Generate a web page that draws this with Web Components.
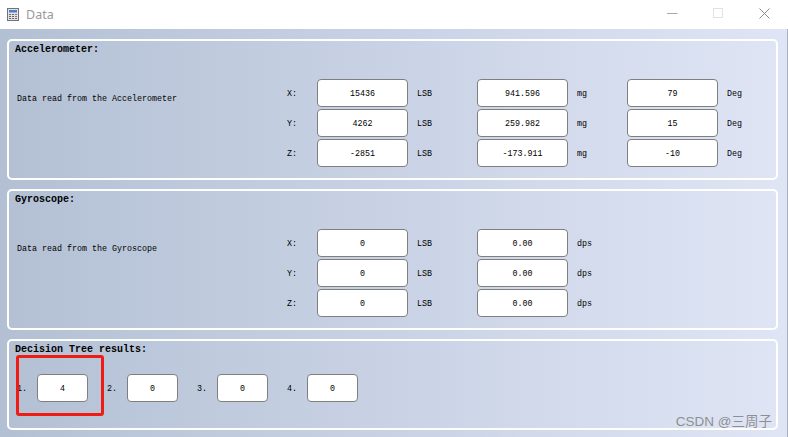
<!DOCTYPE html>
<html>
<head>
<meta charset="utf-8">
<title>Data</title>
<style>
  html, body { margin: 0; padding: 0; height: 100%; background: #fff; overflow: hidden; }
</style>
</head>
<body>
<data-window>
  <sensor-panel heading="Accelerometer:" text="Data read from the Accelerometer">
    <readout-row axis="X:" values="15436|LSB,941.596|mg,79|Deg"></readout-row>
    <readout-row axis="Y:" values="4262|LSB,259.982|mg,15|Deg"></readout-row>
    <readout-row axis="Z:" values="-2851|LSB,-173.911|mg,-10|Deg"></readout-row>
  </sensor-panel>
  <sensor-panel heading="Gyroscope:" text="Data read from the Gyroscope">
    <readout-row axis="X:" values="0|LSB,0.00|dps"></readout-row>
    <readout-row axis="Y:" values="0|LSB,0.00|dps"></readout-row>
    <readout-row axis="Z:" values="0|LSB,0.00|dps"></readout-row>
  </sensor-panel>
  <tree-panel heading="Decision Tree results:" values="4,0,0,0"></tree-panel>
</data-window>

<script>
// caja blanca con el valor
class ValueBox extends HTMLElement {
    constructor() {
        super();
        this.attachShadow({ mode: 'open' });
        this.shadowRoot.innerHTML = `
            <style>
                :host {
                    display: flex;
                    align-items: center;
                    justify-content: center;
                    box-sizing: border-box;
                    width: 91px;
                    height: 28px;
                    padding-top: 1px;
                    background: #fff;
                    border: 1px solid #7f7f7f;
                    border-radius: 4px;
                    font: 8.33px "Liberation Mono", monospace;
                    color: #000;
                }
            </style>
            <slot></slot>
        `;
    }
}
customElements.define('value-box', ValueBox);

class TitleBar extends HTMLElement {
    constructor() {
        super();
        this.attachShadow({ mode: 'open' });
        this.shadowRoot.innerHTML = `
            <style>
                :host {
                    display: flex;
                    align-items: center;
                    height: 29px;
                    flex: none;
                    background: #fff;
                    padding: 0 1px 0 7px;
                    font: 12.5px "Noto Sans", sans-serif;
                    color: #9a9a9a;
                }
                svg { display: block; }
                .name { margin-left: 7px; flex: 1; }
                .btn {
                    display: flex;
                    justify-content: center;
                    align-self: flex-start;
                    margin-top: 8px;
                    width: 46px;
                }
            </style>
            <svg width="12" height="13" viewBox="0 0 12 13">
                <rect x=".5" y=".5" width="11" height="12" fill="#dfe3e8" stroke="#6d7480"/>
                <rect x="2" y="2" width="8" height="2.5" fill="#4f7fc0"/>
                <path d="M2 6h2v1H2zM5 6h2v1H5zM2 8h2v1H2zM5 8h2v1H5zM2 10h2v1H2zM5 10h2v1H5z" fill="#666"/>
                <path d="M8 6h2v1H8zM8 8h2v1H8z" fill="#c85a4a"/>
                <path d="M8 10h2v1H8z" fill="#666"/>
            </svg>
            <span class="name">Data</span>
            <span class="btn"><svg width="11" height="11" viewBox="0 0 11 11"><path d="M0 5.5h10.5" stroke="#a8a8a8"/></svg></span>
            <span class="btn"><svg width="11" height="11" viewBox="0 0 11 11"><rect x=".5" y=".5" width="9" height="9" fill="none" stroke="#e2e2e2"/></svg></span>
            <span class="btn"><svg width="11" height="11" viewBox="0 0 11 11"><path d="M.5.5l10 10M10.5.5l-10 10" stroke="#8a8a8a"/></svg></span>
        `;
    }
}
customElements.define('title-bar', TitleBar);

class ReadoutRow extends HTMLElement {
    constructor() {
        super();
        this.attachShadow({ mode: 'open' });
    }

    connectedCallback() {
        const groups = this.getAttribute('values').split(',');

        let cells = "";
        groups.forEach((g, i) => {
            const parts = g.split('|');
            cells += `<value-box>${parts[0]}</value-box><span class="unit u${i}">${parts[1]}</span>`;
        });

        this.shadowRoot.innerHTML = `
            <style>
                :host {
                    display: flex;
                    align-items: center;
                    height: 28px;
                    font: 8.33px "Liberation Mono", monospace;
                    color: #000;
                }
                .axis { width: 31px; box-sizing: border-box; padding: 1px 0 0 1px; }
                .unit { padding: 1px 0 0 9px; box-sizing: border-box; }
                .u0 { width: 69px; }
                .u1 { width: 59px; }
            </style>
            <span class="axis">${this.getAttribute('axis')}</span>${cells}
        `;
    }
}
customElements.define('readout-row', ReadoutRow);

class SensorPanel extends HTMLElement {
    constructor() {
        super();
        this.attachShadow({ mode: 'open' });
    }

    connectedCallback() {
        this.shadowRoot.innerHTML = `
            <style>
                :host {
                    display: block;
                    box-sizing: border-box;
                    height: 141px;
                    border: 2px solid #fff;
                    border-radius: 5px;
                    padding: 3px 6px 0 6px;
                    color: #000;
                }
                h2 {
                    margin: 0;
                    font: bold 10px/12px "Liberation Mono", monospace;
                }
                .body { display: flex; margin-top: 23px; }
                .text {
                    width: 271px;
                    padding: 15px 0 0 2px;
                    box-sizing: border-box;
                    font: 8.33px/10px "Liberation Mono", monospace;
                }
                .rows { display: flex; flex-direction: column; gap: 2px; }
            </style>
            <h2>${this.getAttribute('heading')}</h2>
            <div class="body">
                <div class="text">${this.getAttribute('text')}</div>
                <div class="rows"><slot></slot></div>
            </div>
        `;
    }
}
customElements.define('sensor-panel', SensorPanel);

class TreePanel extends HTMLElement {
    constructor() {
        super();
        this.attachShadow({ mode: 'open' });
    }

    connectedCallback() {
        const values = this.getAttribute('values').split(',');

        let list = "";
        values.forEach((v, i) => {
            list += `<span class="num">${i + 1}.</span><value-box class="small">${v}</value-box>`;
        });

        this.shadowRoot.innerHTML = `
            <style>
                :host {
                    display: block;
                    position: relative;
                    box-sizing: border-box;
                    height: 91px;
                    border: 2px solid #fff;
                    border-radius: 5px;
                    padding: 3px 6px 0 6px;
                    color: #000;
                }
                h2 {
                    margin: 0;
                    font: bold 10px/12px "Liberation Mono", monospace;
                }
                .row {
                    display: flex;
                    align-items: center;
                    margin: 18px 0 0 2px;
                    font: 8.33px "Liberation Mono", monospace;
                }
                .num { width: 20px; padding-top: 1px; }
                .small { width: 51px; margin-right: 19px; }
                .mark {
                    position: absolute;
                    left: 7px;
                    top: 14px;
                    width: 88px;
                    height: 61px;
                    box-sizing: border-box;
                    border: 3px solid #f01c14;
                    border-radius: 3px;
                }
                .wm {
                    position: absolute;
                    right: 4px;
                    bottom: -2px;
                    font: 13.5px "Liberation Sans", "Noto Sans CJK SC", sans-serif;
                    color: rgba(120, 120, 120, .8);
                }
            </style>
            <h2>${this.getAttribute('heading')}</h2>
            <div class="row">${list}</div>
            <div class="mark"></div>
            <div class="wm">CSDN @三周子</div>
        `;
    }
}
customElements.define('tree-panel', TreePanel);

class DataWindow extends HTMLElement {
    constructor() {
        super();
        this.attachShadow({ mode: 'open' });
        this.shadowRoot.innerHTML = `
            <style>
                :host {
                    display: flex;
                    flex-direction: column;
                    width: 788px;
                    height: 437px;
                }
                .content {
                    flex: 1;
                    display: flex;
                    flex-direction: column;
                    gap: 9px;
                    padding: 10px 9px 0 7px;
                    border-right: 1px solid #aab0bd;
                    background: linear-gradient(to right, #b3c0d4, #dfe5f5);
                }
            </style>
            <title-bar></title-bar>
            <div class="content"><slot></slot></div>
        `;
    }
}
customElements.define('data-window', DataWindow);
</script>
</body>
</html>
